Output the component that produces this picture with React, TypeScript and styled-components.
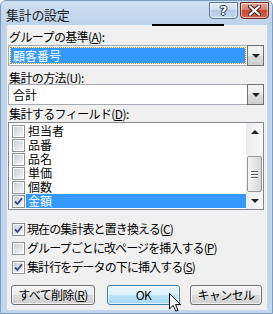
import React from 'react';
import styled, { createGlobalStyle } from 'styled-components';

const GlobalStyle = createGlobalStyle`
  html, body { margin: 0; padding: 0; background: #ffffff; }
  body { font-family: "Noto Sans CJK JP", "Noto Sans", sans-serif; }
  * { box-sizing: border-box; }
`;

const Window = styled.div`
  position: relative;
  width: 273px;
  height: 314px;
  display: flex;
  flex-direction: column;
  background: linear-gradient(#d0e0f3 0px, #bdd3eb 24px, #c2d6ed 100%);
  border: 1px solid #7f9bbb;
  border-radius: 6px 6px 0 0;
  overflow: hidden;
`;

const TitleBar = styled.div`
  height: 24px;
  display: flex;
  align-items: flex-start;
  padding-left: 5px;
`;

const Title = styled.div`
  font-size: 13px;
  line-height: 13px;
  margin-top: 7px;
  color: #1e1e1e;
  letter-spacing: -0.3px;
`;

const CaptionButtons = styled.div`
  margin-left: auto;
  margin-right: 3px;
  display: flex;
  gap: 2px;
  margin-top: 1px;
`;

const CaptionButton = styled.div<{ $close?: boolean }>`
  width: 29px;
  height: 17px;
  border: 1px solid ${p => (p.$close ? '#6b2a21' : '#5b7896')};
  border-radius: 0 0 4px 4px;
  display: flex;
  align-items: center;
  justify-content: center;
  background: ${p =>
    p.$close
      ? 'linear-gradient(#e8a597 0%, #d47b6c 45%, #c44935 50%, #d0654e 100%)'
      : 'linear-gradient(#e5eef9 0%, #cbdcef 45%, #b3c9e3 50%, #c9dcf1 100%)'};
  box-shadow: inset 0 0 0 1px rgba(255, 255, 255, 0.55);
`;

const HelpGlyph = styled.span`
  font-family: "DejaVu Sans", sans-serif;
  font-weight: bold;
  font-size: 13px;
  line-height: 13px;
  color: #ffffff;
  text-shadow: 0 0 1px #233a56, 1px 0 0 #233a56, -1px 0 0 #233a56, 0 1px 0 #233a56, 0 -1px 0 #233a56;
`;

const Client = styled.div`
  flex: 1;
  margin: 0 5px 3px 6px;
  background: #f0f0f0;
  display: flex;
  flex-direction: column;
  padding: 0 3px 0 1px;
  font-size: 12px;
  color: #000;
`;

const Label = styled.div<{ $top: number }>`
  margin-top: ${p => p.$top}px;
  height: 12px;
  line-height: 12px;
  padding-left: 1px;
  font-size: 12px;
  letter-spacing: -0.6px;
  white-space: nowrap;
`;

const Combo = styled.div<{ $top: number }>`
  margin-top: ${p => p.$top}px;
  height: 21px;
  display: flex;
  border: 1px solid #a6abb3;
  background: #ffffff;
`;

const ComboField = styled.div<{ $selected?: boolean }>`
  flex: 1;
  margin: 2px 2px 2px 2px;
  padding-left: 2px;
  display: flex;
  align-items: center;
  font-size: 12px;
  line-height: 12px;
  color: ${p => (p.$selected ? '#ffffff' : '#000000')};
  background: ${p => (p.$selected ? '#3399ff' : 'transparent')};
  outline: ${p => (p.$selected ? '1px dotted #e08a1e' : 'none')};
`;

const DropButton = styled.div`
  width: 17px;
  margin: -1px -1px -1px 0;
  border: 1px solid #707070;
  background: linear-gradient(#f3f3f3 0%, #ebebeb 50%, #dcdcdc 50%, #cfcfcf 100%);
  display: flex;
  align-items: center;
  justify-content: center;
`;

const Triangle = styled.div<{ $up?: boolean }>`
  width: 0;
  height: 0;
  border-left: 4px solid transparent;
  border-right: 4px solid transparent;
  ${p => (p.$up ? 'border-bottom: 4px solid #202020;' : 'border-top: 4px solid #202020;')}
`;

const ListBox = styled.div`
  margin-top: 2px;
  height: 88px;
  display: flex;
  border: 1px solid #828790;
  background: #ffffff;
`;

const Items = styled.div`
  flex: 1;
  display: flex;
  flex-direction: column;
  padding-top: 1px;
`;

const Item = styled.div`
  height: 14px;
  display: flex;
  align-items: center;
  padding-left: 3px;
`;

const ItemText = styled.div<{ $selected?: boolean }>`
  flex: 1;
  height: 14px;
  margin-left: 1px;
  padding-left: 2px;
  font-size: 12px;
  line-height: 14px;
  color: ${p => (p.$selected ? '#ffffff' : '#000000')};
  background: ${p => (p.$selected ? '#3399ff' : 'transparent')};
`;

const ScrollBar = styled.div`
  width: 17px;
  display: flex;
  flex-direction: column;
  background: linear-gradient(90deg, #ececec, #f8f8f8);
`;

const ScrollArrow = styled.div`
  height: 17px;
  display: flex;
  align-items: center;
  justify-content: center;
`;

const ScrollTrack = styled.div`
  flex: 1;
  display: flex;
  flex-direction: column;
  padding-top: 16px;
`;

const Thumb = styled.div`
  height: 36px;
  margin: 0 0 0 1px;
  width: 15px;
  border: 1px solid #979797;
  border-radius: 2px;
  background: linear-gradient(90deg, #f4f4f4, #e6e6e6 50%, #d6d6d6);
  display: flex;
  flex-direction: column;
  align-items: center;
  justify-content: center;
  gap: 2px;
`;

const Grip = styled.div`
  width: 7px;
  height: 1px;
  background: #5a5a5a;
  box-shadow: 0 1px 0 #ffffff;
`;

const Box = styled.div`
  width: 13px;
  height: 13px;
  flex: none;
  border: 1px solid #8e8f8f;
  background: #ffffff;
  padding: 1px;
`;

const BoxInner = styled.div`
  width: 100%;
  height: 100%;
  background: linear-gradient(135deg, #cbcfd5, #f6f6f6);
  display: flex;
  align-items: center;
  justify-content: center;
`;

const Options = styled.div`
  margin-top: 10px;
  display: flex;
  flex-direction: column;
  gap: 1px;
`;

const OptionRow = styled.div`
  height: 18px;
  display: flex;
  align-items: center;
  padding-left: 4px;
  gap: 2px;
`;

const OptionText = styled.span`
  font-size: 12px;
  line-height: 12px;
  letter-spacing: -0.9px;
  white-space: nowrap;
`;

const ButtonRow = styled.div`
  margin-top: 9px;
  display: flex;
  padding-left: 3px;
`;

const Button = styled.div<{ $w: number; $gap: number; $hover?: boolean }>`
  width: ${p => p.$w}px;
  height: 20px;
  margin-left: ${p => p.$gap}px;
  border: 1px solid ${p => (p.$hover ? '#3c7fb1' : '#707070')};
  border-radius: 3px;
  display: flex;
  align-items: center;
  justify-content: center;
  font-size: 12px;
  line-height: 12px;
  letter-spacing: -0.6px;
  background: ${p =>
    p.$hover
      ? 'linear-gradient(#eaf6fd 0%, #d9f0fc 50%, #bee6fd 50%, #a7d9f5 100%)'
      : 'linear-gradient(#f2f2f2 0%, #ebebeb 50%, #dddddd 50%, #cfcfcf 100%)'};
  box-shadow: inset 0 0 0 1px rgba(255, 255, 255, 0.7);
`;

const Artifact = styled.div`
  position: absolute;
  left: 151px;
  top: 23px;
  width: 72px;
  height: 2px;
  background: #000;
`;

const Cursor = styled.svg`
  position: absolute;
  left: 168px;
  top: 292px;
`;

const Check = () => (
  <svg width="9" height="9" viewBox="0 0 9 9">
    <path d="M1 4.5 L3.5 7 L8 1.2" stroke="#2f4a8f" strokeWidth="1.8" fill="none" />
  </svg>
);

const CheckBox = ({ checked }: { checked?: boolean }) => (
  <Box>
    <BoxInner>{checked && <Check />}</BoxInner>
  </Box>
);

const fields = [
  { title: '担当者', selected: false },
  { title: '品番', selected: false },
  { title: '品名', selected: false },
  { title: '単価', selected: false },
  { title: '個数', selected: false },
  { title: '金額', selected: true },
];

const options = [
  { text: '現在の集計表と置き換える(', key: 'C', checked: true },
  { text: 'グループごとに改ページを挿入する(', key: 'P', checked: false },
  { text: '集計行をデータの下に挿入する(', key: 'S', checked: true },
];

const App = () => {
  return (
    <>
      <GlobalStyle />
      <Window>
        <TitleBar>
          <Title>集計の設定</Title>
          <CaptionButtons>
            <CaptionButton>
              <HelpGlyph>?</HelpGlyph>
            </CaptionButton>
            <CaptionButton $close>
              <svg width="13" height="11" viewBox="0 0 13 11">
                <path d="M2 1.5 L11 9.5 M11 1.5 L2 9.5" stroke="#3b1510" strokeWidth="4" strokeLinecap="square" />
                <path d="M2 1.5 L11 9.5 M11 1.5 L2 9.5" stroke="#ffffff" strokeWidth="2.2" strokeLinecap="square" />
              </svg>
            </CaptionButton>
          </CaptionButtons>
        </TitleBar>
        <Client>
          <Label $top={6}>グループの基準(<u>A</u>):</Label>
          <Combo $top={2}>
            <ComboField $selected>顧客番号</ComboField>
            <DropButton><Triangle /></DropButton>
          </Combo>
          <Label $top={6}>集計の方法(<u>U</u>):</Label>
          <Combo $top={0}>
            <ComboField>合計</ComboField>
            <DropButton><Triangle /></DropButton>
          </Combo>
          <Label $top={3}>集計するフィールド(<u>D</u>):</Label>
          <ListBox>
            <Items>
              {fields.map(f => (
                <Item key={f.title}>
                  <CheckBox checked={f.selected} />
                  <ItemText $selected={f.selected}>{f.title}</ItemText>
                </Item>
              ))}
            </Items>
            <ScrollBar>
              <ScrollArrow><Triangle $up /></ScrollArrow>
              <ScrollTrack>
                <Thumb>
                  <Grip />
                  <Grip />
                  <Grip />
                </Thumb>
              </ScrollTrack>
              <ScrollArrow><Triangle /></ScrollArrow>
            </ScrollBar>
          </ListBox>
          <Options>
            {options.map(o => (
              <OptionRow key={o.key}>
                <CheckBox checked={o.checked} />
                <OptionText>
                  {o.text}<u>{o.key}</u>)
                </OptionText>
              </OptionRow>
            ))}
          </Options>
          <ButtonRow>
            <Button $w={84} $gap={0}>すべて削除(<u>R</u>)</Button>
            <Button $w={73} $gap={12} $hover>OK</Button>
            <Button $w={72} $gap={10}>キャンセル</Button>
          </ButtonRow>
        </Client>
        <Artifact />
        <Cursor width="13" height="19" viewBox="0 0 13 19">
          <path d="M0.5 0.5 L0.5 16 L4.2 12.4 L6.8 18.2 L9 17.2 L6.5 11.6 L11.5 11.6 Z" fill="#ffffff" stroke="#000000" strokeWidth="1" />
        </Cursor>
      </Window>
    </>
  );
};

export default App;
